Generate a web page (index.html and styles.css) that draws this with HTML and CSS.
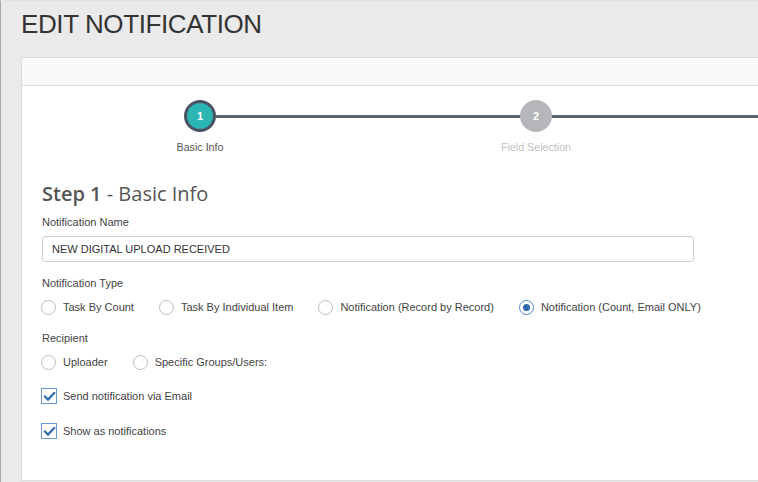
FILE: index.html
```html
<!DOCTYPE html>
<html>
<head>
<meta charset="utf-8">
<link rel="stylesheet" href="styles.css">
</head>
<body>
<div class="page">
  <h1 class="title">EDIT NOTIFICATION</h1>
  <div class="card">
    <div class="card-head"></div>
    <div class="card-body">
      <div class="stepper">
        <div class="step active">
          <div class="dot">1</div>
          <div class="step-label">Basic Info</div>
        </div>
        <div class="step">
          <div class="dot">2</div>
          <div class="step-label">Field Selection</div>
        </div>
      </div>

      <div class="form">
        <h2 class="step-title"><b>Step 1</b> - Basic Info</h2>

        <div class="label">Notification Name</div>
        <div class="input">NEW DIGITAL UPLOAD RECEIVED</div>

        <div class="label type-label">Notification Type</div>
        <div class="radios">
          <span class="opt"><span class="radio"></span>Task By Count</span>
          <span class="opt"><span class="radio"></span>Task By Individual Item</span>
          <span class="opt"><span class="radio"></span>Notification (Record by Record)</span>
          <span class="opt"><span class="radio on"></span>Notification (Count, Email ONLY)</span>
        </div>

        <div class="label rec-label">Recipient</div>
        <div class="radios">
          <span class="opt"><span class="radio"></span>Uploader</span>
          <span class="opt"><span class="radio"></span>Specific Groups/Users:</span>
        </div>

        <div class="check first">
          <span class="box"><svg width="13" height="13" viewBox="0 0 13 13"><path d="M2 6.6 L5 9.6 L11.2 3" fill="none" stroke="#2f6db4" stroke-width="2.2" stroke-linecap="square"/></svg></span>Send notification via Email
        </div>
        <div class="check">
          <span class="box"><svg width="13" height="13" viewBox="0 0 13 13"><path d="M2 6.6 L5 9.6 L11.2 3" fill="none" stroke="#2f6db4" stroke-width="2.2" stroke-linecap="square"/></svg></span>Show as notifications
        </div>
      </div>
    </div>
  </div>
</div>
</body>
</html>
```

FILE: styles.css
```css
html, body {
  margin: 0;
  padding: 0;
  height: 100%;
  overflow: hidden;
}
body {
  background: #ebeaea;
  font-family: "Liberation Sans", Arial, sans-serif;
  color: #444;
}
.page {
  border-left: 1px solid #a9a9a9;
  border-top: 1px solid #e2e2e2;
  padding: 0 0 0 20px;
  min-height: 100%;
  box-sizing: border-box;
}
.title {
  margin: 8px 0 18px 0;
  font-size: 26px;
  line-height: 30px;
  font-weight: normal;
  color: #333;
  letter-spacing: -0.4px;
}
.card {
  width: 1100px;
  background: #fff;
  border: 1px solid #dcdcdc;
}
.card-head {
  height: 27px;
  background: #f9f9f9;
  border-bottom: 1px solid #dcdcdc;
}
.card-body {
  height: 394px;
}
.stepper {
  display: flex;
  margin-left: 10px;
  padding-top: 14px;
}
.step {
  width: 336px;
  display: flex;
  flex-direction: column;
  align-items: center;
  position: relative;
}
.step::after {
  content: "";
  position: absolute;
  left: 50%;
  width: 100%;
  top: 15px;
  height: 3px;
  background: #5c6473;
  z-index: 0;
}
.dot {
  position: relative;
  z-index: 1;
  width: 32px;
  height: 32px;
  border-radius: 50%;
  box-sizing: border-box;
  background: #b6b7ba;
  color: #fff;
  font-size: 11px;
  font-weight: bold;
  display: flex;
  align-items: center;
  justify-content: center;
}
.step.active .dot {
  background: #2bb6b3;
  border: 3px solid #4b5361;
}
.step-label {
  margin-top: 8px;
  font-size: 10.7px;
  line-height: 14px;
  color: #c3c3c3;
}
.step.active .step-label { color: #555; }
.form {
  padding-left: 20px;
}
.step-title {
  margin: 27px 0 0 0;
  font-family: "Open Sans", sans-serif;
  font-size: 20px;
  line-height: 26px;
  font-weight: normal;
  color: #555;
}
.step-title b {
  font-weight: 600;
  color: #555;
}
.label {
  font-size: 11px;
  line-height: 14px;
  color: #444;
  margin-top: 8px;
}
.input {
  margin-top: 7px;
  width: 652px;
  height: 26px;
  box-sizing: border-box;
  border: 1px solid #cfcfcf;
  border-radius: 3px;
  padding-left: 9px;
  font-size: 11px;
  line-height: 24px;
  color: #333;
}
.type-label { margin-top: 14px; }
.rec-label { margin-top: 16px; }
.radios {
  display: flex;
  margin-top: 9px;
  height: 16px;
  align-items: center;
}
.opt {
  display: flex;
  align-items: center;
  font-size: 11px;
  color: #444;
  margin-right: 26px;
  margin-left: -1px;
}
.radio {
  width: 15px;
  height: 15px;
  border-radius: 50%;
  border: 1px solid #bdbdbd;
  box-sizing: border-box;
  margin-right: 7px;
  display: flex;
  align-items: center;
  justify-content: center;
}
.radio.on {
  border-color: #4d86cf;
}
.radio.on::after {
  content: "";
  width: 7px;
  height: 7px;
  border-radius: 50%;
  background: #2c67ad;
}
.check {
  display: flex;
  align-items: center;
  font-size: 11px;
  color: #444;
  margin-top: 19px;
  height: 16px;
}
.check.first { margin-top: 18px; }
.box {
  width: 16px;
  height: 16px;
  box-sizing: border-box;
  border: 1px solid #6a9ad6;
  margin-left: -1px;
  margin-right: 6px;
  display: flex;
  align-items: center;
  justify-content: center;
  background: #fff;
}
.box svg { display: block; }
```
